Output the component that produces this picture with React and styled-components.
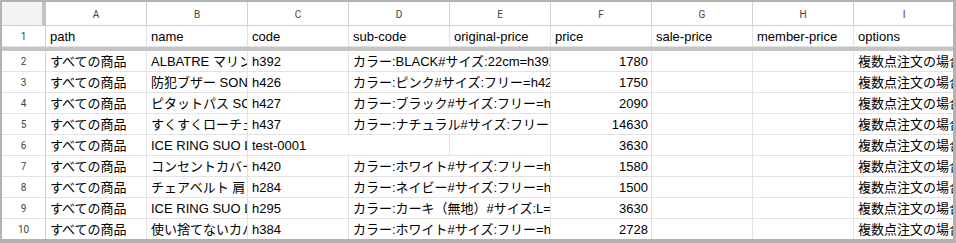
import React from 'react'
import styled, { createGlobalStyle, css } from 'styled-components'

//x//////////////////////////////////////////////////
// Data
//x//////////////////////////////////////////////////

const COLUMNS = ['A', 'B', 'C', 'D', 'E', 'F', 'G', 'H', 'I']

const HEADERS = [
  'path',
  'name',
  'code',
  'sub-code',
  'original-price',
  'price',
  'sale-price',
  'member-price',
  'options',
]

const OPTION = '複数点注文の場合'

const ROWS = [
  ['すべての商品', 'ALBATRE マリン', 'h392', 'カラー:BLACK#サイズ:22cm=h392', '', '1780', '', '', OPTION],
  ['すべての商品', '防犯ブザー SONIC', 'h426', 'カラー:ピンク#サイズ:フリー=h426', '', '1750', '', '', OPTION],
  ['すべての商品', 'ピタットパス SC', 'h427', 'カラー:ブラック#サイズ:フリー=h427', '', '2090', '', '', OPTION],
  ['すべての商品', 'すくすくローチェア', 'h437', 'カラー:ナチュラル#サイズ:フリー', '', '14630', '', '', OPTION],
  ['すべての商品', 'ICE RING SUO L', 'test-0001', '', '', '3630', '', '', OPTION],
  ['すべての商品', 'コンセントカバー', 'h420', 'カラー:ホワイト#サイズ:フリー=h420', '', '1580', '', '', OPTION],
  ['すべての商品', 'チェアベルト 肩', 'h284', 'カラー:ネイビー#サイズ:フリー=h284', '', '1500', '', '', OPTION],
  ['すべての商品', 'ICE RING SUO L', 'h295', 'カラー:カーキ（無地）#サイズ:L=', '', '3630', '', '', OPTION],
  ['すべての商品', '使い捨てないカバー', 'h384', 'カラー:ホワイト#サイズ:フリー=h384', '', '2728', '', '', OPTION],
]

const NUMERIC = new Set([4, 5, 6, 7])

// text spills into at most one empty text neighbour, as the sheet shows it
const spanOf = (values, c) => {
  if (!values[c] || NUMERIC.has(c)) return 1
  const next = c + 1
  return next < values.length && values[next] === '' ? 2 : 1
}

//x//////////////////////////////////////////////////
// Row
//x//////////////////////////////////////////////////

const DataRow = ({ index, values }) => {
  const cells = []
  let c = 0
  while (c < values.length) {
    const span = spanOf(values, c)
    cells.push(
      <SCell key={c} $span={span} $right={NUMERIC.has(c)}>
        {values[c]}
      </SCell>
    )
    c += span
  }
  return (
    <>
      <SRowHead>{index}</SRowHead>
      {cells}
    </>
  )
}

//x//////////////////////////////////////////////////
// App
//x//////////////////////////////////////////////////

export default function App() {
  return (
    <>
      <GlobalStyle />
      <SFrame>
        <SSheet>
          <SCorner />
          {COLUMNS.map((col) => (
            <SColHead key={col}>{col}</SColHead>
          ))}

          <SRowHead>1</SRowHead>
          {HEADERS.map((h) => (
            <SCell key={h}>{h}</SCell>
          ))}
          <SFrozenBar />

          {ROWS.map((row, i) => (
            <DataRow key={i} index={i + 2} values={row} />
          ))}
        </SSheet>
      </SFrame>
    </>
  )
}

//x//////////////////////////////////////////////////
// Styles
//x//////////////////////////////////////////////////

const GlobalStyle = createGlobalStyle`
  html, body {
    margin: 0;
    background: #b2b2b2;
  }
  * {
    box-sizing: border-box;
  }
`

const SFrame = styled.div`
  width: 956px;
  height: 243px;
  padding: 2px 3px 4px 2px;
  background: #b2b2b2;
  overflow: hidden;
`

const SSheet = styled.div`
  height: 100%;
  background: #fff;
  overflow: hidden;
  display: grid;
  grid-template-columns: 44px repeat(9, 101px);
  grid-template-rows: 24px 21px 4px;
  grid-auto-rows: 21px;
  font-family: 'Liberation Sans', Arial, 'Noto Sans CJK JP', sans-serif;
`

const headText = css`
  display: flex;
  align-items: center;
  justify-content: center;
  font-family: Roboto, 'Liberation Sans', sans-serif;
  font-size: 10px;
  color: #444;
`

const SCorner = styled.div`
  background: #f3f3f3;
  border-right: 4px solid #c2c2c2;
  border-bottom: 1px solid #d0d0d0;
`

const SColHead = styled.div`
  ${headText}
  padding-top: 1px;
  background: #fff;
  border-right: 1px solid #d0d0d0;
  border-bottom: 1px solid #d0d0d0;
`

const SRowHead = styled.div`
  ${headText}
  padding-top: 1px;
  background: #fff;
  border-right: 1px solid #d0d0d0;
  border-bottom: 1px solid #e2e2e2;
`

const SFrozenBar = styled.div`
  grid-column: 1 / -1;
  background: #c4c4c4;
`

const SCell = styled.div(
  ({ $span = 1, $right }) => css`
    grid-column: span ${$span};
    border-right: 1px solid #e2e2e2;
    border-bottom: 1px solid #e2e2e2;
    padding: 2px 3px 0 4px;
    font-size: 13px;
    line-height: 18px;
    color: #000;
    white-space: nowrap;
    overflow: hidden;
    text-align: ${$right ? 'right' : 'left'};
  `
)
